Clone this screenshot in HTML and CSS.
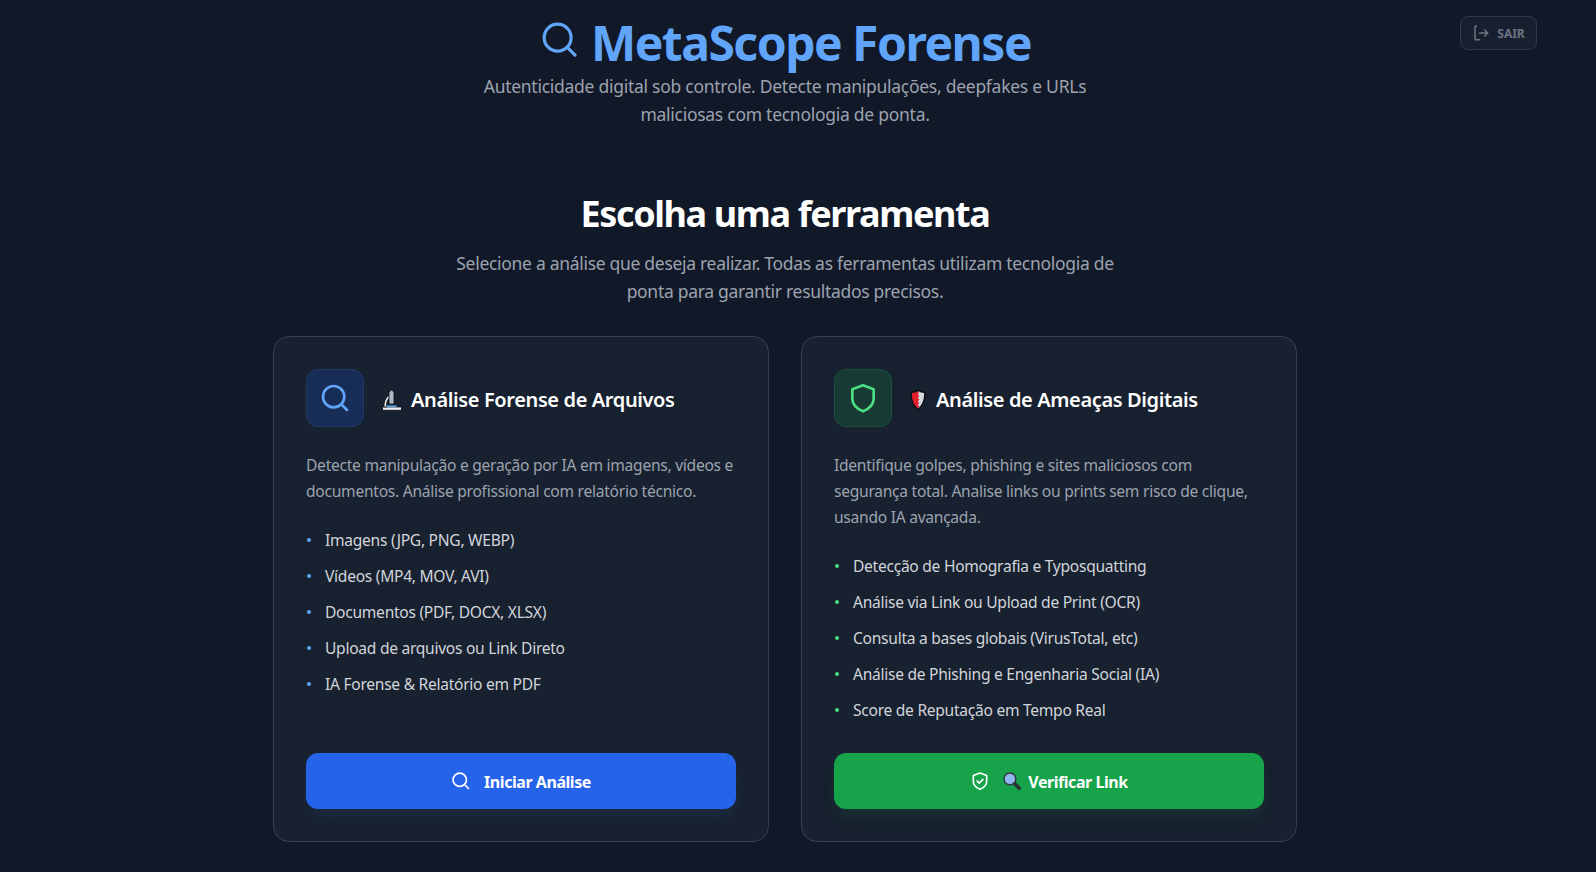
FILE: index.html
```html
<!DOCTYPE html>
<html lang="pt-BR">
<head>
    <meta charset="UTF-8">
    <meta name="viewport" content="width=device-width, initial-scale=1.0">
    <title>MetaScope Forense</title>
    <link rel="stylesheet" href="styles.css">
</head>
<body>

    <!-- Logout -->
    <button class="logout-btn">
        <svg class="logout-icon" viewBox="0 0 24 24"><path d="M6 3H4v17a1 1 0 0 0 1 1h5M10 12h11M17 8l4 4-4 4"/></svg>
        SAIR
    </button>

    <main class="container">
        <!-- Header -->
        <header class="page-header">
            <h1 class="brand">
                <svg class="brand-icon" viewBox="0 0 24 24"><circle cx="10.5" cy="10.5" r="8.5"/><path d="M21.5 21.5l-5-5"/></svg>
                MetaScope Forense
            </h1>
            <p class="brand-sub">Autenticidade digital sob controle. Detecte manipulações, deepfakes e URLs maliciosas com tecnologia de ponta.</p>
        </header>

        <section class="intro">
            <h2>Escolha uma ferramenta</h2>
            <p>Selecione a análise que deseja realizar. Todas as ferramentas utilizam tecnologia de ponta para garantir resultados precisos.</p>
        </section>

        <!-- Tools -->
        <div class="tools">
            <article class="card card-blue">
                <div class="card-head">
                    <div class="card-icon">
                        <svg viewBox="0 0 24 24"><circle cx="11" cy="11" r="8"/><path d="M21 21l-4.3-4.3"/></svg>
                    </div>
                    <h3>
                        <svg class="emoji emoji-scope" viewBox="0 0 20 22">
                            <rect class="scope-part" x="0.500" y="18" width="19" height="3.200"/>
                            <path class="scope-part" d="M2 18c0-5 1-8.500 5-12v3.500c-2 1.800-2.600 4.500-2.600 8.500z"/>
                            <path class="scope-tube" d="M7 2.800 9.500 1 12 2.800V15H7z"/>
                            <rect class="scope-blue" x="4.500" y="16.400" width="10" height="1.600"/>
                        </svg>
                        Análise Forense de Arquivos
                    </h3>
                </div>
                <p class="card-desc">Detecte manipulação e geração por IA em imagens, vídeos e documentos. Análise profissional com relatório técnico.</p>
                <ul class="features">
                    <li>Imagens (JPG, PNG, WEBP)</li>
                    <li>Vídeos (MP4, MOV, AVI)</li>
                    <li>Documentos (PDF, DOCX, XLSX)</li>
                    <li>Upload de arquivos ou Link Direto</li>
                    <li>IA Forense &amp; Relatório em PDF</li>
                </ul>
                <button class="card-btn">
                    <svg class="btn-icon" viewBox="0 0 24 24"><circle cx="10.500" cy="10.500" r="8"/><path d="M21 21l-4.800-4.800"/></svg>
                    <span class="btn-text">Iniciar Análise</span>
                </button>
            </article>

            <article class="card card-green">
                <div class="card-head">
                    <div class="card-icon">
                        <svg viewBox="0 0 24 24"><path d="M12 2.500 20 5.500v7c0 4.500-3.500 7.500-8 9.500-4.500-2-8-5-8-9.500v-7z"/></svg>
                    </div>
                    <h3>
                        <svg class="emoji emoji-shield" viewBox="0 0 16 22">
                            <path class="shield-edge" d="M8 .5c2.200 1.300 4.800 2 7.500 2 .6 7.500-1.400 14.500-7.500 19C1.900 17 -.1 10 .5 2.500 3.200 2.500 5.800 1.800 8 .5z"/>
                            <path class="shield-white" d="M8 2.200c1.900 1 3.900 1.600 6 1.800.3 5.800-1.400 11.600-6 15.500z"/>
                            <path class="shield-red" d="M8 2.200C6.100 3.200 4.100 3.800 2 4 1.700 9.800 3.400 15.600 8 19.500l1.400-2-1.700-1.500 1.700-1.900-1.700-1.600 1.700-1.900-1.700-1.600 1.700-1.900-1.700-1.600 1.200-1.700z"/>
                        </svg>
                        Análise de Ameaças Digitais
                    </h3>
                </div>
                <p class="card-desc">Identifique golpes, phishing e sites maliciosos com segurança total. Analise links ou prints sem risco de clique, usando IA avançada.</p>
                <ul class="features">
                    <li>Detecção de Homografia e Typosquatting</li>
                    <li>Análise via Link ou Upload de Print (OCR)</li>
                    <li>Consulta a bases globais (VirusTotal, etc)</li>
                    <li>Análise de Phishing e Engenharia Social (IA)</li>
                    <li>Score de Reputação em Tempo Real</li>
                </ul>
                <button class="card-btn">
                    <svg class="btn-icon" viewBox="0 0 24 24"><path d="M12 2.500 20 5.500v7c0 4.500-3.500 7.500-8 9.500-4.500-2-8-5-8-9.500v-7z"/><path d="M8.500 12l2.500 2.500 4.500-4.500"/></svg>
                    <svg class="emoji emoji-lens" viewBox="0 0 17 17">
                        <path class="lens-handle" d="M10.500 10.500 15.300 15.300"/>
                        <circle class="lens-glass" cx="6.500" cy="6.500" r="5.600"/>
                    </svg>
                    <span class="btn-text">Verificar Link</span>
                </button>
            </article>
        </div>
    </main>

</body>
</html>
```

FILE: styles.css
```css
* {
    box-sizing: border-box;
}

html,
body {
    height: 872px;
    overflow: hidden;
}

body {
    font-family: 'Noto Sans', sans-serif;
    background-color: #111827;
    margin: 0;
    color: #fff;
}

.container {
    width: 1024px;
    margin-left: 273px;
    padding-top: 13px;
}

/* Logout */
.logout-btn {
    position: absolute;
    top: 16px;
    left: 1460px;
    width: 77px;
    height: 34px;
    display: flex;
    align-items: center;
    justify-content: center;
    gap: 7px;
    padding: 0;
    font-family: inherit;
    font-size: 12px;
    font-weight: 700;
    color: #6b7280;
    background-color: #18202f;
    border: 1px solid #2f3949;
    border-radius: 8px;
}

.logout-icon {
    width: 18px;
    height: 18px;
    fill: none;
    stroke: #6b7280;
    stroke-width: 2;
    stroke-linecap: round;
    stroke-linejoin: round;
}

/* Header */
.page-header {
    text-align: center;
}

.brand {
    display: flex;
    align-items: center;
    justify-content: center;
    gap: 12px;
    margin: 0;
    height: 59px;
    font-size: 48px;
    font-weight: 700;
    color: #60a5fa;
    letter-spacing: -1.5px;
}

.brand-icon {
    width: 38px;
    height: 38px;
    fill: none;
    stroke: #60a5fa;
    stroke-width: 2;
    stroke-linecap: round;
    margin-top: -6px;
    margin-left: 2px;
}

.brand-sub {
    width: 672px;
    margin: 0 auto;
    font-size: 17.5px;
    line-height: 28px;
    color: #9ca3af;
    letter-spacing: -0.27px;
}

.intro {
    text-align: center;
    margin-top: 66px;
}

.intro h2 {
    margin: 0;
    font-size: 36px;
    line-height: 40px;
    font-weight: 700;
    letter-spacing: -1.38px;
}

.intro p {
    width: 672px;
    margin: 15px auto 0;
    font-size: 17.5px;
    line-height: 28px;
    color: #9ca3af;
    letter-spacing: -0.3px;
}

/* Cards */
.tools {
    display: grid;
    grid-template-columns: 1fr 1fr;
    gap: 32px;
    margin-top: 31px;
}

.card {
    height: 506px;
    display: flex;
    flex-direction: column;
    padding: 32px;
    background-color: #18212f;
    border: 1px solid #374151;
    border-radius: 16px;
}

.card-head {
    display: flex;
    align-items: center;
    gap: 16px;
    margin-bottom: 25px;
}

.card-icon {
    width: 58px;
    height: 58px;
    display: flex;
    align-items: center;
    justify-content: center;
    border-radius: 12px;
    border: 1px solid;
}

.card-icon svg {
    width: 32px;
    height: 32px;
    fill: none;
    stroke-width: 2;
    stroke-linecap: round;
    stroke-linejoin: round;
}

.card-blue .card-icon {
    background-color: #182d55;
    border-color: #1e3a6e;
}

.card-blue .card-icon svg {
    stroke: #60a5fa;
}

.card-green .card-icon {
    background-color: #173a35;
    border-color: #1b5138;
}

.card-green .card-icon svg {
    stroke: #4ade80;
}

.card h3 {
    display: flex;
    align-items: center;
    gap: 9px;
    margin: 0;
    padding-top: 3px;
    font-size: 20px;
    font-weight: 600;
    letter-spacing: -0.38px;
}

.card-desc {
    margin: 0 0 24px;
    font-size: 15.6px;
    line-height: 26px;
    color: #9ca3af;
    letter-spacing: -0.27px;
}

.features {
    list-style: none;
    margin: 0;
    padding: 0;
}

.features li {
    position: relative;
    height: 36px;
    line-height: 24px;
    padding-left: 19px;
    font-size: 15.6px;
    color: #d1d5db;
    letter-spacing: -0.28px;
}

.features li::before {
    content: "";
    position: absolute;
    left: 1px;
    top: 10px;
    width: 4px;
    height: 4px;
    border-radius: 50%;
}

.card-blue li::before {
    background-color: #60a5fa;
}

.card-green li::before {
    background-color: #4ade80;
}

.card-btn {
    margin-top: auto;
    height: 56px;
    display: flex;
    align-items: center;
    justify-content: center;
    gap: 13px;
    border: none;
    border-radius: 12px;
    font-family: inherit;
    font-size: 16px;
    font-weight: 700;
    color: #fff;
    letter-spacing: -0.45px;
}

.btn-text {
    padding-top: 2px;
}

.card-blue .card-btn {
    background-color: #2563eb;
    box-shadow: 0 10px 15px -3px rgba(59, 130, 246, 0.1);
}

.card-green .card-btn {
    background-color: #16a34a;
    box-shadow: 0 10px 15px -3px rgba(34, 197, 94, 0.1);
}

.btn-icon {
    width: 20px;
    height: 20px;
    fill: none;
    stroke: #fff;
    stroke-width: 2;
    stroke-linecap: round;
    stroke-linejoin: round;
}

/* Emoji drawings */
.emoji {
    flex: none;
}

.emoji-scope {
    width: 20px;
    height: 22px;
    margin-left: 2px;
}

.scope-part {
    fill: #eef1f3;
    stroke: #0b0f14;
    stroke-width: 0.800;
}

.scope-tube {
    fill: #aeb8c2;
    stroke: #0b0f14;
    stroke-width: 0.800;
}

.scope-blue {
    fill: #4fa8f0;
}

.emoji-shield {
    width: 16px;
    height: 22px;
    margin-left: 2px;
    margin-right: 1px;
}

.shield-edge {
    fill: #0e1218;
}

.shield-white {
    fill: #d5dadf;
}

.shield-red {
    fill: #e5202e;
}

.emoji-lens {
    width: 18px;
    height: 18px;
    margin-right: -6px;
}

.lens-handle {
    fill: none;
    stroke: #2c3138;
    stroke-width: 3.500;
    stroke-linecap: round;
}

.lens-glass {
    fill: #8fb8ee;
    stroke: #333a44;
    stroke-width: 1.400;
}
```
